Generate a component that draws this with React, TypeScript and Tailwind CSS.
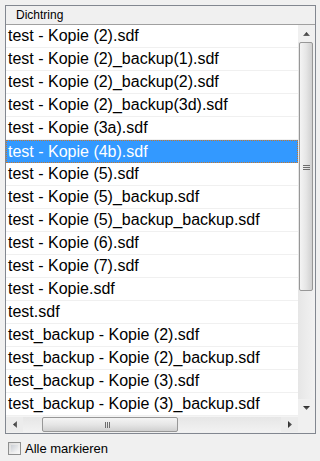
import React from "react";

const rows = [
  "test - Kopie (2).sdf",
  "test - Kopie (2)_backup(1).sdf",
  "test - Kopie (2)_backup(2).sdf",
  "test - Kopie (2)_backup(3d).sdf",
  "test - Kopie (3a).sdf",
  "test - Kopie (4b).sdf",
  "test - Kopie (5).sdf",
  "test - Kopie (5)_backup.sdf",
  "test - Kopie (5)_backup_backup.sdf",
  "test - Kopie (6).sdf",
  "test - Kopie (7).sdf",
  "test - Kopie.sdf",
  "test.sdf",
  "test_backup - Kopie (2).sdf",
  "test_backup - Kopie (2)_backup.sdf",
  "test_backup - Kopie (3).sdf",
  "test_backup - Kopie (3)_backup.sdf",
];

function Arrow({ dir }: { dir: "up" | "down" | "left" | "right" }) {
  const pts: Record<string, string> = {
    up: "0,4 7,4 3.5,0",
    down: "0,0 7,0 3.5,4",
    left: "4,0 4,7 0,3.5",
    right: "0,0 0,7 4,3.5",
  };
  const vertical = dir === "up" || dir === "down";
  return (
    <svg width={vertical ? 7 : 4} height={vertical ? 4 : 7} viewBox={vertical ? "0 0 7 4" : "0 0 4 7"}>
      <defs>
        <linearGradient id={"g" + dir} x1="0" y1="0" x2={vertical ? "0" : "1"} y2={vertical ? "1" : "0"}>
          <stop offset="0" stopColor="#2a2a2a" />
          <stop offset="1" stopColor="#6a6a6a" />
        </linearGradient>
      </defs>
      <polygon points={pts[dir]} fill={"url(#g" + dir + ")"} />
    </svg>
  );
}

export default function App() {
  return (
    <div
      className="w-[320px] h-[461px] bg-[#f0f0f0] overflow-hidden pt-[5px] pl-[5px]"
      style={{ fontFamily: '"Liberation Sans", Arial, sans-serif' }}
    >
      <div className="w-[311px] h-[429px] border border-[#828790] flex flex-col">
        {/* header */}
        <div className="h-[19px] border-b border-[#a0a0a0] bg-[#f0f0f0] flex items-center pl-[10px] text-[12px] leading-[19px] text-black shrink-0">
          Dichtring
        </div>
        <div className="flex flex-1 min-h-0">
          {/* list column */}
          <div className="w-[292px] flex flex-col">
            <div className="h-[391px] bg-white overflow-hidden">
              {rows.map((r, i) => {
                const sel = i === 5;
                return (
                  <div
                    key={i}
                    className={
                      sel
                        ? "h-[23px] bg-[#3399ff] text-white text-[16px] leading-[21px] whitespace-nowrap pl-[1px] border border-dotted border-[#c8772a]"
                        : "h-[23px] border-b border-[#f0f0f0] text-black text-[16px] leading-[22px] whitespace-nowrap pl-[2px]"
                    }
                  >
                    {r}
                  </div>
                );
              })}
            </div>
            {/* horizontal scrollbar */}
            <div className="h-[16px] flex bg-[#ececec] border-t border-[#f4f4f4]">
              <div className="w-[17px] flex items-center justify-center pl-[1px]">
                <Arrow dir="left" />
              </div>
              <div className="flex-1 relative bg-gradient-to-b from-[#e6e6e6] to-[#f2f2f2]">
                <div className="absolute left-[19px] top-[0px] w-[136px] h-[15px] rounded-[2px] border border-[#979797] bg-gradient-to-b from-[#f4f4f4] via-[#e6e6e6] to-[#d0d0d0] flex items-center justify-center">
                  <div className="flex gap-[1px] -ml-[5px]">
                    <div className="w-[1px] h-[6px] bg-[#6d6d6d]" />
                    <div className="w-[1px] h-[6px] bg-[#6d6d6d]" />
                    <div className="w-[1px] h-[6px] bg-[#6d6d6d]" />
                  </div>
                </div>
              </div>
              <div className="w-[17px] flex items-center justify-center">
                <Arrow dir="right" />
              </div>
            </div>
          </div>
          {/* vertical scrollbar column */}
          <div className="w-[17px] flex flex-col">
            <div className="h-[391px] flex flex-col bg-gradient-to-r from-[#e6e6e6] to-[#f2f2f2]">
              <div className="h-[17px] flex items-center justify-center bg-[#f0f0f0] shrink-0">
                <Arrow dir="up" />
              </div>
              <div className="flex-1 relative">
                <div className="absolute left-[1px] top-[0px] w-[14px] h-[249px] rounded-[2px] border border-[#979797] bg-gradient-to-r from-[#f4f4f4] via-[#e6e6e6] to-[#d0d0d0] flex items-center justify-center">
                  <div className="flex flex-col gap-[1px] mt-[2px]">
                    <div className="w-[7px] h-[1px] bg-[#6d6d6d]" />
                    <div className="w-[7px] h-[1px] bg-[#6d6d6d]" />
                    <div className="w-[7px] h-[1px] bg-[#6d6d6d]" />
                  </div>
                </div>
              </div>
              <div className="h-[17px] flex items-center justify-center bg-[#f0f0f0] shrink-0">
                <Arrow dir="down" />
              </div>
            </div>
            <div className="h-[16px] bg-[#f0f0f0]" />
          </div>
        </div>
      </div>
      {/* checkbox row */}
      <div className="flex items-center mt-[8px] ml-[3px] h-[13px]">
        <div className="w-[13px] h-[13px] border border-[#8e8f8f] bg-gradient-to-br from-[#dcdcdc] to-[#f8f8f8] p-[2px]">
          <div className="w-full h-full bg-gradient-to-br from-[#cbcfd5] to-[#f6f6f6]" />
        </div>
        <span className="ml-[4px] text-[13px] leading-[13px] text-black">Alle markieren</span>
      </div>
    </div>
  );
}
